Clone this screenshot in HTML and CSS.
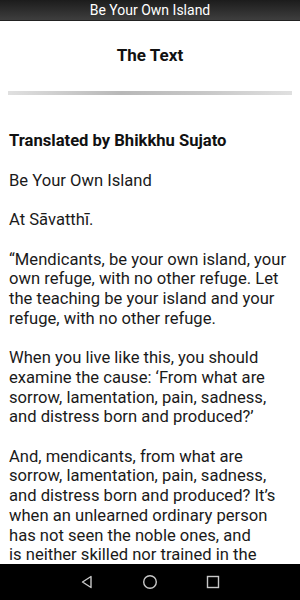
FILE: index.html
```html
<!DOCTYPE html>
<html>
<head>
<meta charset="utf-8">
<link rel="stylesheet" href="styles.css">
</head>
<body>
<div class="appbar">Be Your Own Island</div>
<div class="content">
  <h2 class="title">The Text</h2>
  <div class="rule"></div>
  <p class="byline">Translated by Bhikkhu Sujato</p>
  <p>Be Your Own Island</p>
  <p>At Sāvatthī.</p>
  <p>“Mendicants, be your own island, your own refuge, with no other refuge. Let the teaching be your island and your refuge, with no other refuge.</p>
  <p>When you live like this, you should examine the cause: ‘From what are sorrow, lamentation, pain, sadness, and distress born and produced?’</p>
  <p>And, mendicants, from what are sorrow, lamentation, pain, sadness, and distress born and produced? It’s when an unlearned ordinary person has not seen the noble ones, and<br>is neither skilled nor trained in the teaching of the noble ones.</p>
</div>
<div class="navbar">
  <svg class="nav-icon" viewBox="0 0 16 16"><path d="M12 2.5 L3.5 8 L12 13.5 Z" fill="none" stroke="#c8c8c8" stroke-width="1.4" stroke-linejoin="round"/></svg>
  <svg class="nav-icon" viewBox="0 0 16 16"><circle cx="8" cy="8" r="6.3" fill="none" stroke="#c8c8c8" stroke-width="1.4"/></svg>
  <svg class="nav-icon" viewBox="0 0 16 16"><rect x="2.5" y="2.5" width="11" height="11" fill="none" stroke="#c8c8c8" stroke-width="1.4"/></svg>
</div>
</body>
</html>
```
FILE: styles.css
```css
html, body {
  margin: 0;
  padding: 0;
  height: 600px;
  overflow: hidden;
  background: #fff;
  font-family: Roboto, "Liberation Sans", sans-serif;
  color: #1a1a1a;
}
.appbar {
  height: 21px;
  background: linear-gradient(#1c1c1c, #3e3e3e);
  border-bottom: 1px solid #222;
  color: #fff;
  font-size: 14px;
  line-height: 21px;
  text-align: center;
  box-sizing: border-box;
}
.content {
  height: 543px;
  overflow: hidden;
  padding: 0 9px;
}
.title {
  margin: 0;
  padding-top: 23px;
  font-size: 17px;
  line-height: 22px;
  font-weight: bold;
  text-align: center;
  color: #111;
}
.rule {
  margin: 25px -1px 0;
  height: 4px;
  background: linear-gradient(to right, #e0e0e0, #b8b8b8 40%, #c8c8c8 70%, #e0e0e0);
}
p {
  margin: 0 0 19.8px;
  font-size: 16.6px;
  line-height: 19.7px;
}
.byline {
  margin-top: 36px;
  font-weight: bold;
  color: #111;
}
.navbar {
  height: 36px;
  background: #000;
  display: flex;
  justify-content: center;
  align-items: center;
  gap: 47px;
}
.nav-icon {
  width: 16px;
  height: 16px;
}
```
